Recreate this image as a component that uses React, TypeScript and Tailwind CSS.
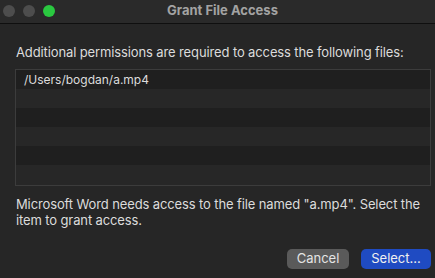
import React from "react";

export default function App() {
  const rows = [0, 1, 2, 3, 4, 5];
  return (
    <div
      className="w-[435px] h-[278px] bg-[#262626] flex flex-col overflow-hidden"
      style={{ fontFamily: "Inter, 'Noto Sans', sans-serif" }}
    >
      <div className="h-[24px] relative flex items-center border-b border-[#0f0f0f] bg-[#2a2a2a] shrink-0">
        <div className="flex items-center gap-[8px] pl-[3px] pb-[2px]">
          <div className="w-[12px] h-[12px] rounded-full bg-[#4d4d4d]" />
          <div className="w-[12px] h-[12px] rounded-full bg-[#4d4d4d]" />
          <div className="w-[12px] h-[12px] rounded-full bg-[#2ac840]" />
        </div>
        <div className="absolute inset-0 pl-[10px] pb-[2px] flex items-center justify-center text-[13px] font-bold text-[#a3a3a3]">
          Grant File Access
        </div>
      </div>
      <div className="pl-[15px] pr-[4px] flex flex-col">
        <div className="mt-[20px] text-[13px] leading-[16px] tracking-[-0.12px] text-[#dcdcdc] pl-[1px]">
          Additional permissions are required to access the following files:
        </div>
        <div className="mt-[9px] border border-[#3c3c3c] w-[416px] flex flex-col">
          {rows.map((i) => (
            <div
              key={i}
              className={`h-[19px] flex items-center pl-[8px] text-[12px] text-[#dcdcdc] ${
                i % 2 === 0 ? "bg-[#1f1f1f]" : "bg-[#272727]"
              }`}
            >
              {i === 0 ? "/Users/bogdan/a.mp4" : ""}
            </div>
          ))}
          <div className="h-[1px] bg-[#272727]" />
        </div>
        <div className="mt-[10px] text-[13px] leading-[16px] tracking-[-0.12px] text-[#dcdcdc] pl-[1px]">
          Microsoft Word needs access to the file named "a.mp4". Select the item to grant access.
        </div>
        <div className="mt-[21px] flex justify-end gap-[12px]">
          <div className="w-[62px] h-[20px] rounded-[5px] bg-[#5a5a5a] flex items-center justify-center text-[13px] text-[#e4e4e4]">
            Cancel
          </div>
          <div className="w-[70px] h-[20px] rounded-[5px] bg-[#1f4bc2] flex items-center justify-center text-[13px] text-[#f0f0f0]">
            Select...
          </div>
        </div>
      </div>
    </div>
  );
}
